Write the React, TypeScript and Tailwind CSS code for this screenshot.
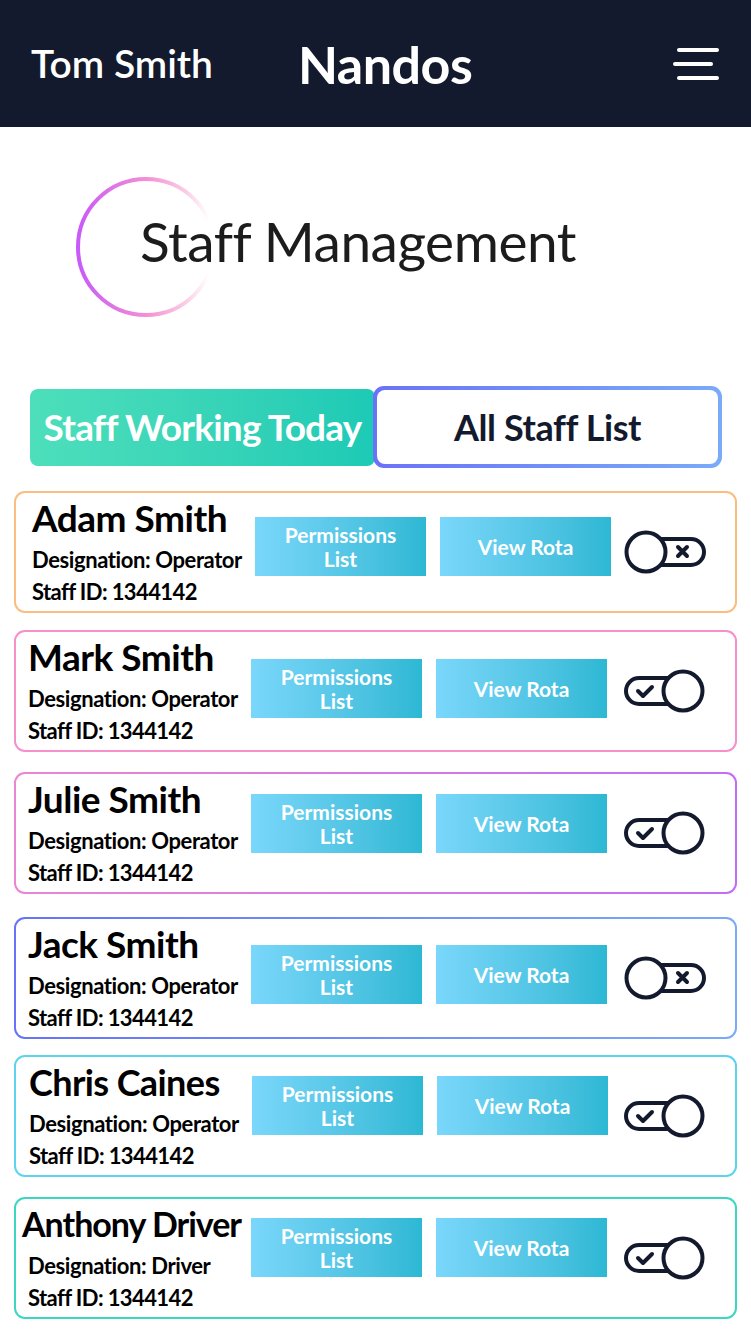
import { useState } from 'react';

const font = { fontFamily: 'Lato, "Open Sans", sans-serif' };

type Staff = {
  name: string;
  role: string;
  id: string;
  on: boolean;
  border: string;
  gap: string;
  pad: string;
  btnTop: string;
  nameSize: string;
};

const staff: Staff[] = [
  { name: 'Adam Smith', role: 'Operator', id: '1344142', on: false, border: 'bg-[#f9be80]', gap: 'mt-[23px]', pad: 'pl-[16px]', btnTop: 'pt-[24px]', nameSize: 'text-[37px] tracking-[-0.5px]' },
  { name: 'Mark Smith', role: 'Operator', id: '1344142', on: true, border: 'bg-[#f590cb]', gap: 'mt-[17px]', pad: 'pl-[12px]', btnTop: 'pt-[27px]', nameSize: 'text-[37px] tracking-[-0.5px]' },
  { name: 'Julie Smith', role: 'Operator', id: '1344142', on: true, border: 'bg-gradient-to-r from-[#ea86d2] to-[#c26cf6]', gap: 'mt-[20px]', pad: 'pl-[12px]', btnTop: 'pt-[20px]', nameSize: 'text-[37px] tracking-[-0.5px]' },
  { name: 'Jack Smith', role: 'Operator', id: '1344142', on: false, border: 'bg-gradient-to-r from-[#6673f6] to-[#7aaaf8]', gap: 'mt-[23px]', pad: 'pl-[12px]', btnTop: 'pt-[26px]', nameSize: 'text-[37px] tracking-[-0.5px]' },
  { name: 'Chris Caines', role: 'Operator', id: '1344142', on: true, border: 'bg-[#5dd3ee]', gap: 'mt-[16px]', pad: 'pl-[13px]', btnTop: 'pt-[19px]', nameSize: 'text-[36px] tracking-[-0.6px]' },
  { name: 'Anthony Driver', role: 'Driver', id: '1344142', on: true, border: 'bg-[#3dd6c2]', gap: 'mt-[20px]', pad: 'pl-[12px]', btnTop: 'pt-[19px]', nameSize: 'text-[34px] tracking-[-1px] -ml-[6px]' },
];

function Toggle({ on }: { on: boolean }) {
  if (on) {
    return (
      <svg width="82" height="46" viewBox="0 0 82 46">
        <rect x="2" y="10" width="58" height="26" rx="13" fill="white" stroke="#141a2e" strokeWidth="4" />
        <path d="M14 23 L19 28 L28 19" fill="none" stroke="#141a2e" strokeWidth="4" strokeLinecap="round" strokeLinejoin="round" />
        <circle cx="59" cy="23" r="19.5" fill="white" stroke="#141a2e" strokeWidth="4" />
      </svg>
    );
  }
  return (
    <svg width="82" height="46" viewBox="0 0 82 46">
      <rect x="22" y="10" width="58" height="26" rx="13" fill="white" stroke="#141a2e" strokeWidth="4" />
      <path d="M54 18 L63 27 M63 18 L54 27" fill="none" stroke="#141a2e" strokeWidth="4" strokeLinecap="round" />
      <circle cx="22" cy="23" r="19.5" fill="white" stroke="#141a2e" strokeWidth="4" />
    </svg>
  );
}

function StaffCard({ s }: { s: Staff }) {
  return (
    <div className={`${s.gap} ${s.border} p-[2px] rounded-[11px]`}>
      <div className={`bg-white rounded-[9px] h-[118px] flex ${s.pad}`}>
        <div className={`shrink-0 pt-[5px] text-black ${s.pad === 'pl-[16px]' ? 'w-[223px]' : 'w-[223px]'}`}>
          <div className={`${s.nameSize} font-bold leading-[40px] whitespace-nowrap`}>{s.name}</div>
          <div className="text-[22px] font-bold leading-[28px] mt-[8px] tracking-[-0.4px] whitespace-nowrap">Designation: {s.role}</div>
          <div className="text-[22px] font-bold leading-[28px] mt-[4px] tracking-[-0.6px] whitespace-nowrap">Staff ID: {s.id}</div>
        </div>
        <div className={`flex items-start gap-[14px] ${s.btnTop}`}>
          <button className="w-[171px] h-[59px] bg-gradient-to-r from-[#79d7fb] to-[#2cb8d4] text-white text-[21px] font-bold leading-[24px]">
            Permissions
            <br />
            List
          </button>
          <button className="w-[171px] h-[59px] bg-gradient-to-r from-[#79d7fb] to-[#2cb8d4] text-white text-[21px] font-bold">
            View Rota
          </button>
        </div>
        <div className="ml-auto mr-[29px] flex items-center">
          <Toggle on={s.on} />
        </div>
      </div>
    </div>
  );
}

export default function App() {
  const [tab, setTab] = useState(0);

  return (
    <div className="w-[751px] min-h-[1334px] bg-white" style={font}>
      <header className="h-[127px] bg-[#141a2e] flex items-center pl-[31px] pr-[32px] text-white">
        <div className="text-[39px] font-semibold">Tom Smith</div>
        <div className="ml-[85px] text-[52px] font-bold tracking-[-0.5px]">Nandos</div>
        <button className="ml-auto flex flex-col items-end gap-[10px]">
          <span className="block w-[42px] h-[4px] bg-white rounded-full" />
          <span className="block w-[40px] h-[4px] bg-white rounded-full mr-[6px]" />
          <span className="block w-[42px] h-[4px] bg-white rounded-full" />
        </button>
      </header>

      <section className="relative h-[259px]">
        <svg className="absolute left-[74px] top-[48px]" width="144" height="144" viewBox="0 0 144 144">
          <defs>
            <linearGradient id="ring" x1="0" y1="0" x2="1" y2="0">
              <stop offset="0" stopColor="#c85af9" />
              <stop offset="0.5" stopColor="#f38fd3" />
              <stop offset="0.8" stopColor="#fbcfe6" />
              <stop offset="0.96" stopColor="#ffffff" />
            </linearGradient>
          </defs>
          <circle cx="72" cy="72" r="68" fill="none" stroke="url(#ring)" strokeWidth="4" />
        </svg>
        <h1 className="absolute left-[140px] top-[81px] text-[55px] leading-[1.2] text-[#1c1c1c] tracking-[-0.5px]">
          Staff Management
        </h1>
      </section>

      <div className="flex items-center pl-[30px] pr-[29px]">
        <button
          onClick={() => setTab(0)}
          className="w-[345px] h-[77px] rounded-[8px] bg-gradient-to-r from-[#4ddfbb] to-[#1ccab5] text-white text-[37px] font-bold tracking-[-0.8px]"
        >
          Staff Working Today
        </button>
        <div className="-ml-[2px] p-[4px] rounded-[11px] bg-gradient-to-r from-[#6a72f8] to-[#7aaaf8]">
          <button
            onClick={() => setTab(1)}
            className="w-[341px] h-[74px] rounded-[8px] bg-white text-[#141a2e] text-[36px] font-bold tracking-[-0.4px]"
          >
            All Staff List
          </button>
        </div>
      </div>
      <span className="hidden">{tab}</span>

      <div className="px-[14px] pb-[14px]">
        {staff.map((s) => (
          <StaffCard key={s.name} s={s} />
        ))}
      </div>
    </div>
  );
}
